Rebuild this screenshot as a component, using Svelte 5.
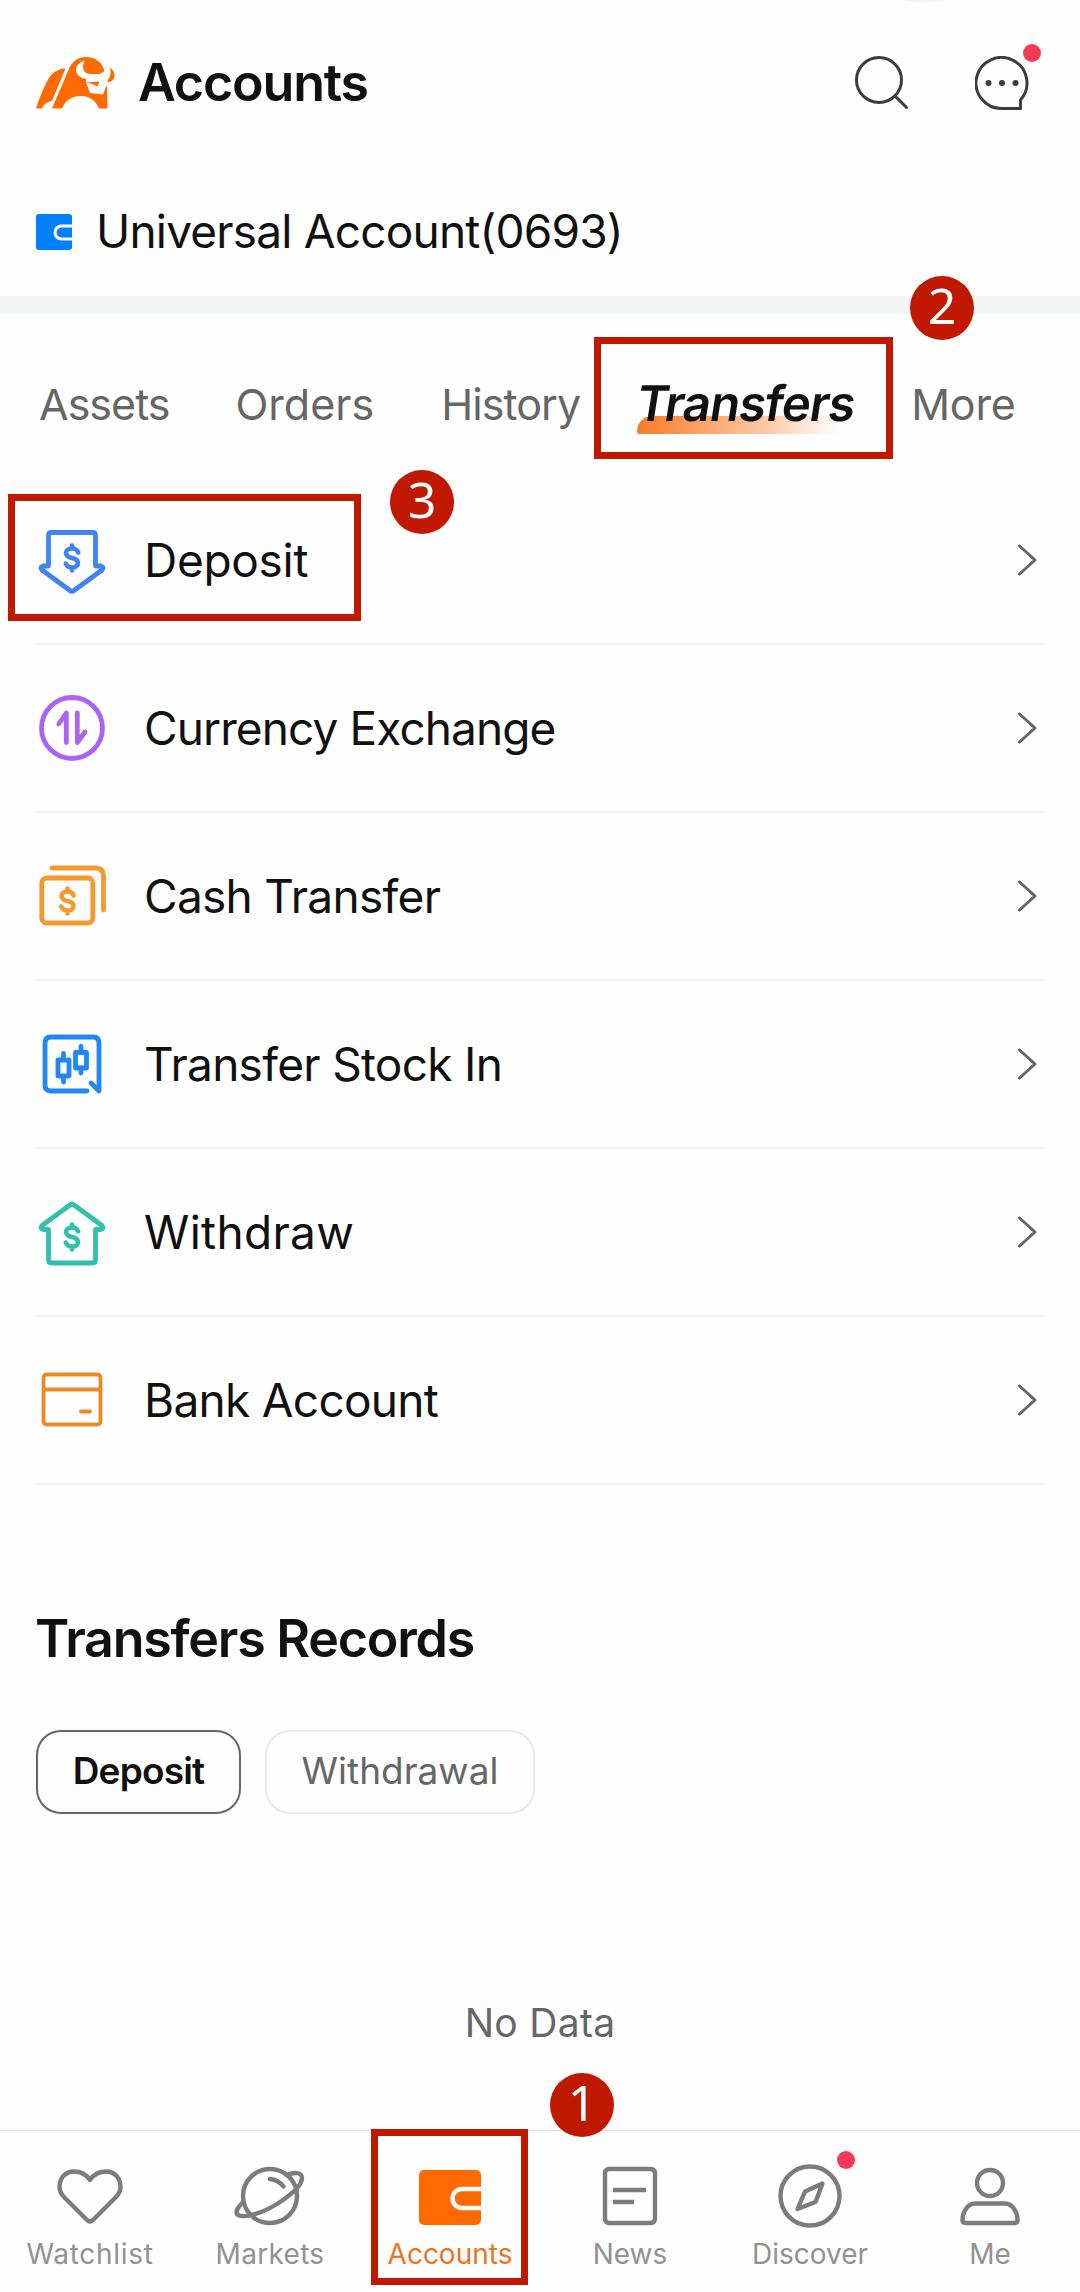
<script>
  const tabs = ['Assets', 'Orders', 'History', 'Transfers', 'More'];
  const rows = [
    { id: 'deposit', label: 'Deposit' },
    { id: 'exchange', label: 'Currency Exchange' },
    { id: 'cash', label: 'Cash Transfer' },
    { id: 'stock', label: 'Transfer Stock In' },
    { id: 'withdraw', label: 'Withdraw' },
    { id: 'bank', label: 'Bank Account' }
  ];
  const navItems = ['Watchlist', 'Markets', 'Accounts', 'News', 'Discover', 'Me'];

  let activeTab = $state('Transfers');
  let activeRecord = $state('Deposit');
  let activeNav = $state('Accounts');
</script>

{#snippet dollar(x, y)}
  <g transform="translate({x} {y})">
    <path d="M6.2 -5.5C5.2 -8.5 3 -9.5 0 -9.5C-3.8 -9.5 -6 -7.5 -6 -5C-6 -1.5 -3 -0.8 0 0C3.5 0.8 6 2 6 5C6 7.8 3.5 9.5 0 9.5C-3.2 9.5 -5.2 8.2 -6.2 5.5M0 -12.5V-10M0 10V12.5" stroke-width="4.6" />
  </g>
{/snippet}

<div class="screen">
  <header class="header">
    <svg class="logo" viewBox="0 0 80 54">
      <path d="M0 51.500C4 40 8 29 13 21C17 15 22 12 29.500 11.500L16 44C11 45 7.500 47 6 51.500Z" />
      <path d="M16 51.500L32.500 13C36 4 42 0 50 0C59 0 66 5 68.500 14L71 28L71.500 51.500H63C59 42 52 39 45 39C37 39 30 42 26 51.500Z" />
      <path class="cut" d="M49 3.500C43 5 40 9 40 13C40 18 45 21 50 22L50 25L54 36L67 37.500L70 30L74 25L76 15L71 9C70 13 67 16.500 62 17C55 17.500 49 17 47.500 13C46.500 10 47 6 49 3.500Z" />
      <path d="M50 25.500L63.500 24.500L61.500 29.500L56 27Z" />
      <path d="M74 10.500C78 14 80 18 77.500 22C75.500 25 72.500 25.500 71 24.500C74.500 20 75.500 15 74 10.500Z" />
    </svg>
    <h1>Accounts</h1>
    <svg class="search" viewBox="0 0 56 56">
      <circle cx="24" cy="24" r="22.500" />
      <path d="M40 40L51.500 51.500" />
    </svg>
    <div class="chat">
      <svg viewBox="0 0 56 56">
        <path d="M27 52.500A25.500 25.500 0 1 1 45.500 44V52.500Z" />
        <g class="dots">
          <circle cx="13.500" cy="27" r="3" />
          <circle cx="27" cy="27" r="3" />
          <circle cx="40.500" cy="27" r="3" />
        </g>
      </svg>
      <i class="dot"></i>
    </div>
  </header>

  <div class="account">
    <svg viewBox="0 0 36 36">
      <rect width="36" height="36" rx="3" fill="#0080ff" />
      <path d="M36 12H25.500a6.500 6.500 0 0 0 0 13H36" fill="none" stroke="#fff" stroke-width="3" />
    </svg>
    <span>Universal Account(0693)</span>
  </div>
  <div class="band"><b class="step step-2">2</b></div>

  <nav class="tabs">
    {#each tabs as tab}
      <button type="button" class="tab {tab.toLowerCase()}" class:active={activeTab === tab} onclick={() => (activeTab = tab)}>
        <span>{tab}</span>
        {#if tab === 'Transfers'}<i class="frame frame-tab"></i>{/if}
      </button>
    {/each}
  </nav>

  <ul class="rows">
    {#each rows as row}
      <li class={row.id}>
        <svg class="row-icon" viewBox="0 0 72 72">
          {#if row.id === 'deposit'}
            <path d="M15.500 8.500H56.500Q59.500 8.500 59.500 11.500V42H65Q68.500 43 66 46L38 66.500Q36 68 34 66.500L6 46Q3.500 43 7 42H12.500V11.500Q12.500 8.500 15.500 8.500Z" />
            {@render dollar(36, 34)}
          {:else if row.id === 'exchange'}
            <circle cx="36" cy="36" r="30.500" />
            <path d="M22.700 32L30.300 21V50.500M41.300 21V50.500L49 40" />
          {:else if row.id === 'cash'}
            <path d="M16 8H59.500Q67.500 8 67.500 16V50" />
            <rect x="5.800" y="18" width="51" height="45" rx="5" />
            {@render dollar(31.5, 41)}
          {:else if row.id === 'stock'}
            <path d="M51 63H15Q9 63 9 57V15Q9 9 15 9H57Q63 9 63 15V63L55 55" />
            <path d="M27.500 25.500V31M27.500 49V54M45 18.500V24M45 40V45" />
            <rect x="22" y="32" width="11" height="16" />
            <rect x="39.500" y="24.500" width="11" height="15.500" />
          {:else if row.id === 'withdraw'}
            <path d="M15.500 67H56.500Q59.500 67 59.500 64V33.500H65Q68.500 32.500 66 29.500L38 9Q36 7.500 34 9L6 29.500Q3.500 32.500 7 33.500H12.500V64Q12.500 67 15.500 67Z" />
            {@render dollar(36, 41)}
          {:else}
            <rect x="7.500" y="10.500" width="57" height="50" rx="3" />
            <path d="M7.500 25.500H64.500M45 47.500H54" />
          {/if}
        </svg>
        <span>{row.label}</span>
        <svg class="chevron" viewBox="0 0 20 32"><path d="M1.500 2L17 16L1.500 30" /></svg>
        {#if row.id === 'deposit'}
          <i class="frame frame-row"></i>
          <b class="step step-3">3</b>
        {/if}
      </li>
    {/each}
  </ul>

  <h2>Transfers Records</h2>
  <div class="pills">
    {#each ['Deposit', 'Withdrawal'] as kind}
      <button type="button" class:active={activeRecord === kind} onclick={() => (activeRecord = kind)}>{kind}</button>
    {/each}
  </div>
  <p class="empty">No Data</p>

  <footer class="bottom-nav">
    {#each navItems as item}
      <button type="button" class={item.toLowerCase()} class:active={activeNav === item} onclick={() => (activeNav = item)}>
        <svg viewBox="0 0 72 72">
          {#if item === 'Watchlist'}
            <path d="M36 17C32 11 26 8.500 20 8.500C11 8.500 5.500 15.500 5.500 24C5.500 28 7 31 10 34L33 57Q36 60 39 57L62 34C65 31 66.500 28 66.500 24C66.500 15.500 61 8.500 52 8.500C46 8.500 40 11 36 17Z" />
          {:else if item === 'Markets'}
            <circle cx="36" cy="33" r="27" />
            <path d="M36 16C42 16.500 46 19 49.500 23.500M53 12C60 9 68 9 68 15C68 22 58 31 46 39C33 48 12 56 4 52C0 49 5 43 9 39" />
          {:else if item === 'Accounts'}
            <rect x="5" y="7" width="62" height="55" rx="5" fill="currentColor" stroke="none" />
            <path class="clasp" d="M69 26H48a9.500 9.500 0 0 0 0 19H69" />
          {:else if item === 'News'}
            <rect x="11" y="6" width="50" height="54" rx="4" />
            <path class="lines" d="M19 27H52M19 39H40" />
          {:else if item === 'Discover'}
            <circle cx="36" cy="33" r="29.500" />
            <path d="M48.500 20.500L31 28.500L23.500 46L41.500 39Z" />
          {:else}
            <circle cx="36" cy="20" r="13" />
            <path d="M21 40.500H51C59 40.500 63.500 50 63.500 57Q63.500 60 60.500 60H11.500Q8.500 60 8.500 57C8.500 50 13 40.500 21 40.500Z" />
          {/if}
        </svg>
        <span>{item}</span>
        {#if item === 'Accounts'}
          <i class="frame frame-nav"></i>
          <b class="step step-1">1</b>
        {:else if item === 'Discover'}
          <i class="dot"></i>
        {/if}
      </button>
    {/each}
  </footer>
</div>

<style>
  :global(body) {
    margin: 0;
    background: #fff;
  }

  .screen {
    display: flex;
    flex-direction: column;
    width: 1080px;
    height: 2292px;
    overflow: hidden;
    background: #fefefe;
    color: #111;
    font-family: Inter, 'Liberation Sans', sans-serif;
  }

  .screen * {
    box-sizing: border-box;
  }

  svg {
    flex: none;
    fill: none;
    stroke-linecap: round;
    stroke-linejoin: round;
  }

  button {
    padding: 0;
    border: 0;
    background: none;
    color: inherit;
    font-family: inherit;
    white-space: nowrap;
  }

  .header {
    position: relative;
    display: flex;
    align-items: center;
    height: 166px;
    padding: 2px 49px 0 36px;
  }

  /* lower edge of the floating handle above the screen */
  .header::before {
    content: '';
    position: absolute;
    left: 898px;
    top: -5px;
    width: 50px;
    height: 7px;
    border-radius: 50%;
    background: #f3f3f3;
  }

  .logo {
    width: 80px;
    height: 54px;
    fill: #ff6a00;
  }

  .cut {
    fill: #fefefe;
  }

  h1 {
    flex: 1;
    margin: -3px 0 0 22px;
    font-size: 52px;
    line-height: 62px;
    font-weight: 600;
    letter-spacing: -1.2px;
  }

  .search,
  .chat svg {
    display: block;
    width: 56px;
    height: 56px;
    stroke: #3c3c3c;
    stroke-width: 3;
  }

  .chat {
    position: relative;
    margin-left: 64px;
  }

  .dots {
    fill: #3c3c3c;
    stroke: none;
  }

  .dot {
    position: absolute;
    width: 18px;
    height: 18px;
    border-radius: 50%;
    background: #f53855;
  }

  .chat .dot {
    top: -12px;
    right: -10px;
  }

  .account {
    display: flex;
    align-items: center;
    height: 130px;
    padding: 2px 36px 0;
    font-size: 46px;
    letter-spacing: -0.8px;
  }

  .account svg {
    width: 36px;
    height: 36px;
    margin-right: 24px;
  }

  .account span {
    margin-top: -2px;
  }

  .band {
    position: relative;
    flex: none;
    height: 18px;
    background: #f4f6f6;
  }

  .tabs {
    display: flex;
    align-items: flex-end;
    height: 163px;
    padding: 0 39px 47px;
    color: #666;
  }

  .tab {
    position: relative;
    font-size: 43px;
    line-height: 52px;
  }

  .assets {
    letter-spacing: -1px;
  }

  .orders {
    margin-left: 66px;
    letter-spacing: 0;
  }

  .history {
    margin-left: 67px;
    letter-spacing: -0.9px;
  }

  .transfers {
    margin-left: 57px;
    letter-spacing: -1px;
  }

  .more {
    margin-left: 56px;
    letter-spacing: -0.2px;
  }

  .tab.active {
    color: #111;
    font-size: 49px;
    line-height: 53px;
    font-weight: 600;
  }

  .tab.active::before {
    content: '';
    position: absolute;
    left: 0;
    bottom: -4px;
    width: 214px;
    height: 18px;
    border-radius: 16px 0 16px 3px;
    background: linear-gradient(100deg, #f97b25, #fdc9a6 60%, #fefefe 94%);
  }

  .tab span {
    position: relative;
  }

  .tab.active span {
    display: inline-block;
    transform: skewX(-9deg);
  }

  .frame {
    position: absolute;
    border: 7px solid #c11900;
    pointer-events: none;
  }

  .frame-tab {
    left: -43px;
    bottom: -29px;
    width: 299px;
    height: 122px;
  }

  .frame-row {
    left: -28px;
    top: 17px;
    width: 353px;
    height: 127px;
  }

  .frame-nav {
    left: 11px;
    top: -2px;
    width: 157px;
    height: 156px;
  }

  .step {
    position: absolute;
    z-index: 2;
    width: 64px;
    height: 64px;
    border-radius: 50%;
    background: #c11900;
    color: #fff;
    font: 400 50px/59px 'Noto Sans', sans-serif;
    letter-spacing: 0;
    text-align: center;
  }

  .step-1 {
    left: 190px;
    top: -58px;
  }

  .step-2 {
    left: 910px;
    top: -20px;
  }

  .step-3 {
    left: 354px;
    top: -7px;
  }

  .rows {
    margin: 0;
    padding: 0 36px;
    list-style: none;
  }

  .rows li {
    position: relative;
    display: flex;
    align-items: center;
    height: 168px;
    padding-right: 6px;
    border-bottom: 2px solid #f3f3f3;
    font-size: 46px;
    letter-spacing: -0.7px;
  }

  .row-icon {
    width: 72px;
    height: 72px;
    stroke-width: 4.8;
  }

  .rows span {
    flex: 1;
    margin-left: 36px;
  }

  .deposit { stroke: #3f83f5; }
  .exchange { stroke: #ad63f2; }
  .cash { stroke: #f39a2f; }
  .stock { stroke: #2386f5; }
  .withdraw { stroke: #33bfae; }
  .bank { stroke: #ea8a25; }

  .rows .deposit {
    letter-spacing: -0.3px;
  }

  .rows .exchange {
    letter-spacing: -0.9px;
  }

  .rows .withdraw {
    letter-spacing: 0.3px;
  }

  .bank .row-icon {
    stroke-width: 3.8;
  }

  .chevron {
    width: 20px;
    height: 32px;
    stroke: #666;
    stroke-width: 3;
  }

  h2 {
    margin: 123px 0 0 35px;
    font-size: 52px;
    line-height: 62px;
    font-weight: 600;
    letter-spacing: -1.25px;
  }

  .pills {
    display: flex;
    gap: 24px;
    padding: 60px 36px 0;
  }

  .pills button {
    width: 270px;
    height: 84px;
    padding: 0 0 3px;
    border: 2px solid #eaeaea;
    border-radius: 25px;
    color: #666;
    font-size: 37px;
  }

  .pills .active {
    width: 205px;
    border-color: #666;
    color: #111;
    font-weight: 600;
    letter-spacing: -0.8px;
  }

  .empty {
    margin: 184px 0 0;
    color: #666;
    font-size: 39px;
    line-height: 50px;
    letter-spacing: 0.3px;
    text-align: center;
  }

  .bottom-nav {
    display: grid;
    grid-template-columns: repeat(6, 180px);
    height: 162px;
    margin-top: auto;
    border-top: 1px solid #dedede;
  }

  .bottom-nav button {
    position: relative;
    display: flex;
    flex-direction: column;
    align-items: center;
    padding-top: 32px;
    color: #929292;
    font-size: 28px;
    line-height: 34px;
  }

  .bottom-nav svg {
    width: 72px;
    height: 72px;
    margin-bottom: 2px;
    stroke: #7c7c7c;
    stroke-width: 4.4;
  }

  .bottom-nav .watchlist {
    letter-spacing: 0.7px;
  }

  .bottom-nav .markets {
    letter-spacing: 0.3px;
  }

  .bottom-nav .active {
    color: #ff6a00;
  }

  .bottom-nav .active span {
    color: #ec7425;
  }

  .clasp {
    stroke: #fefefe;
    stroke-linecap: butt;
  }

  .lines {
    stroke-linecap: butt;
  }

  .discover .dot {
    left: 117px;
    top: 20px;
  }
</style>
